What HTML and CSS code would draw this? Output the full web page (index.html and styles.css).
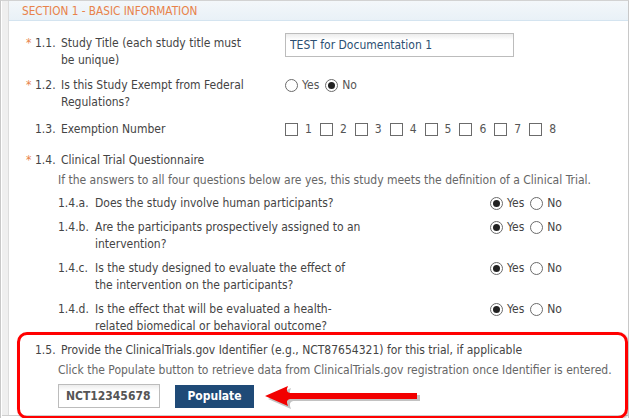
FILE: index.html
```html
<!DOCTYPE html>
<html lang="en">
<head>
  <meta charset="UTF-8">
  <title>Basic Information</title>
  <link rel="stylesheet" href="styles.css">
</head>
<body>
  <div class="frame">
    <div class="shell">
      <div class="panel">
        <div class="panel-head">SECTION 1 - BASIC INFORMATION</div>
        <div class="panel-body">

          <div class="field f-title">
            <div class="label"><span class="req">*</span><span class="num">1.1.</span><span class="text">Study Title (each study title must be unique)</span></div>
            <div class="control"><input class="text-input title-input" type="text" value="TEST for Documentation 1"></div>
          </div>

          <div class="field f-exempt">
            <div class="label"><span class="req">*</span><span class="num">1.2.</span><span class="text">Is this Study Exempt from Federal Regulations?</span></div>
            <div class="control radios">
              <span class="opt"><span class="radio"></span>Yes</span>
              <span class="opt"><span class="radio checked"></span>No</span>
            </div>
          </div>

          <div class="field f-number">
            <div class="label"><span class="req"></span><span class="num">1.3.</span><span class="text">Exemption Number</span></div>
            <div class="control checks">
              <span class="chk"><span class="box"></span>1</span>
              <span class="chk"><span class="box"></span>2</span>
              <span class="chk"><span class="box"></span>3</span>
              <span class="chk"><span class="box"></span>4</span>
              <span class="chk"><span class="box"></span>5</span>
              <span class="chk"><span class="box"></span>6</span>
              <span class="chk"><span class="box"></span>7</span>
              <span class="chk"><span class="box"></span>8</span>
            </div>
          </div>

          <div class="group">
            <div class="label"><span class="req">*</span><span class="num">1.4.</span><span class="text wide">Clinical Trial Questionnaire</span></div>
            <p class="help">If the answers to all four questions below are yes, this study meets the definition of a Clinical Trial.</p>

            <div class="sub sub-first">
              <span class="sub-num">1.4.a.</span>
              <span class="sub-text">Does the study involve human participants?</span>
              <div class="radios">
                <span class="opt"><span class="radio checked"></span>Yes</span>
                <span class="opt"><span class="radio"></span>No</span>
              </div>
            </div>
            <div class="sub">
              <span class="sub-num">1.4.b.</span>
              <span class="sub-text">Are the participants prospectively assigned to an<br>intervention?</span>
              <div class="radios">
                <span class="opt"><span class="radio checked"></span>Yes</span>
                <span class="opt"><span class="radio"></span>No</span>
              </div>
            </div>
            <div class="sub">
              <span class="sub-num">1.4.c.</span>
              <span class="sub-text">Is the study designed to evaluate the effect of<br>the intervention on the participants?</span>
              <div class="radios">
                <span class="opt"><span class="radio checked"></span>Yes</span>
                <span class="opt"><span class="radio"></span>No</span>
              </div>
            </div>
            <div class="sub">
              <span class="sub-num">1.4.d.</span>
              <span class="sub-text">Is the effect that will be evaluated a health-<br>related biomedical or behavioral outcome?</span>
              <div class="radios">
                <span class="opt"><span class="radio checked"></span>Yes</span>
                <span class="opt"><span class="radio"></span>No</span>
              </div>
            </div>
          </div>

          <div class="highlight">
            <div class="label"><span class="num">1.5.</span><span class="text wide">Provide the ClinicalTrials.gov Identifier (e.g., NCT87654321) for this trial, if applicable</span></div>
            <p class="help">Click the Populate button to retrieve data from ClinicalTrials.gov registration once Identifier is entered.</p>
            <div class="actions">
              <input class="text-input nct-input" type="text" value="NCT12345678">
              <button class="btn-populate" type="button">Populate</button>
              <svg class="arrow" width="160" height="26" viewBox="0 0 160 26">
                <path d="M4 15 L27 4 Q24 10 29 11 L156 11 L156 17 L29 17 Q24 18 27 25 Z" fill="#9a9a9a" opacity="0.6"/>
                <path d="M1 12 L24 2 Q21 8 26 9 L153 9 L153 15 L26 15 Q21 16 24 22 Z" fill="#f20000"/>
              </svg>
            </div>
          </div>

        </div>
      </div>
    </div>
  </div>
</body>
</html>
```

FILE: styles.css
```css
body {
  margin: 0;
  font-family: "DejaVu Sans Condensed", "Liberation Sans", sans-serif;
  font-size: 12px;
  line-height: 17px;
  color: #555;
  background: #fff;
}
.frame {
  width: 629px;
  height: 418px;
  box-sizing: border-box;
  overflow: hidden;
  border-top: 1px solid #d2d2d2;
  border-left: 1px solid #c8c8c8;
  border-right: 1px solid #c8c8c8;
  padding-left: 1px;
}
.shell {
  background: #efefef;
  padding-left: 6px;
  height: 414px;
  border-bottom: 1px solid #cfcfcf;
}
.panel {
  background: #fff;
  border-left: 1px solid #dcdcdc;
  height: 100%;
}
.panel-head {
  height: 19px;
  line-height: 20px;
  padding-left: 13px;
  background: linear-gradient(#f3f7fa, #e9f1f7);
  border-bottom: 1px solid #d4e4f0;
  color: #e8824a;
  font-size: 11.7px;
}
.panel-body {
  padding: 14px 0 0 17px;
}
.field {
  display: grid;
  grid-template-columns: 259px 1fr;
  align-items: start;
}
.f-title {
  margin-bottom: 8px;
}
.f-exempt {
  margin-bottom: 10px;
}
.f-number {
  margin-bottom: 14px;
}
.label {
  display: flex;
  color: #444;
}
.req {
  width: 9px;
  color: #e8824a;
}
.num {
  width: 26px;
}
.text {
  width: 196px;
}
.text.wide {
  width: auto;
}
.text-input {
  font-family: inherit;
  font-size: 12px;
  box-sizing: border-box;
  border: 1px solid #bcbcbc;
  background: linear-gradient(#ececec, #fff 6px);
  outline: none;
}
.title-input {
  width: 229px;
  height: 24px;
  margin-top: -2px;
  padding: 0 4px;
  color: #2c4f72;
}
.radios {
  display: flex;
  gap: 6px;
  height: 17px;
}
.opt {
  display: flex;
  align-items: center;
  gap: 4px;
}
.radio {
  width: 13px;
  height: 13px;
  box-sizing: border-box;
  border: 1px solid #6b6b6b;
  border-radius: 50%;
  background: #fff;
  display: flex;
  align-items: center;
  justify-content: center;
}
.radio.checked::after {
  content: "";
  width: 7px;
  height: 7px;
  border-radius: 50%;
  background: #222;
}
.checks {
  display: flex;
}
.chk {
  display: flex;
  align-items: center;
  margin-right: 8px;
}
.box {
  width: 13px;
  height: 13px;
  box-sizing: border-box;
  border: 1px solid #6b6b6b;
  margin-right: 7px;
}
.help {
  margin: 3px 0 0 32px;
  color: #666;
}
.sub {
  display: grid;
  grid-template-columns: 37px 395px auto;
  align-items: start;
  margin: 7px 0 0 32px;
  color: #444;
}
.sub.sub-first {
  margin-top: 6px;
}
.highlight {
  margin: -3px 0 0 -9px;
  padding: 7px 0 6px 15px;
  border: 3px solid #f00;
  border-radius: 10px;
  box-shadow: 1px 1px 2px rgba(0, 0, 0, 0.25);
}
.highlight .help {
  margin: 3px 0 0 23px;
}
.actions {
  display: flex;
  align-items: center;
  margin: 3px 0 0 23px;
}
.nct-input {
  width: 102px;
  height: 24px;
  padding: 0 7px;
  font-size: 12px;
  font-weight: bold;
  color: #555;
}
.btn-populate {
  margin-left: 15px;
  width: 79px;
  height: 23px;
  border: none;
  background: #1f4a77;
  color: #fff;
  font-family: inherit;
  font-size: 12px;
  font-weight: bold;
  padding: 0;
}
.arrow {
  margin-left: 10px;
  margin-top: 2px;
}
```
